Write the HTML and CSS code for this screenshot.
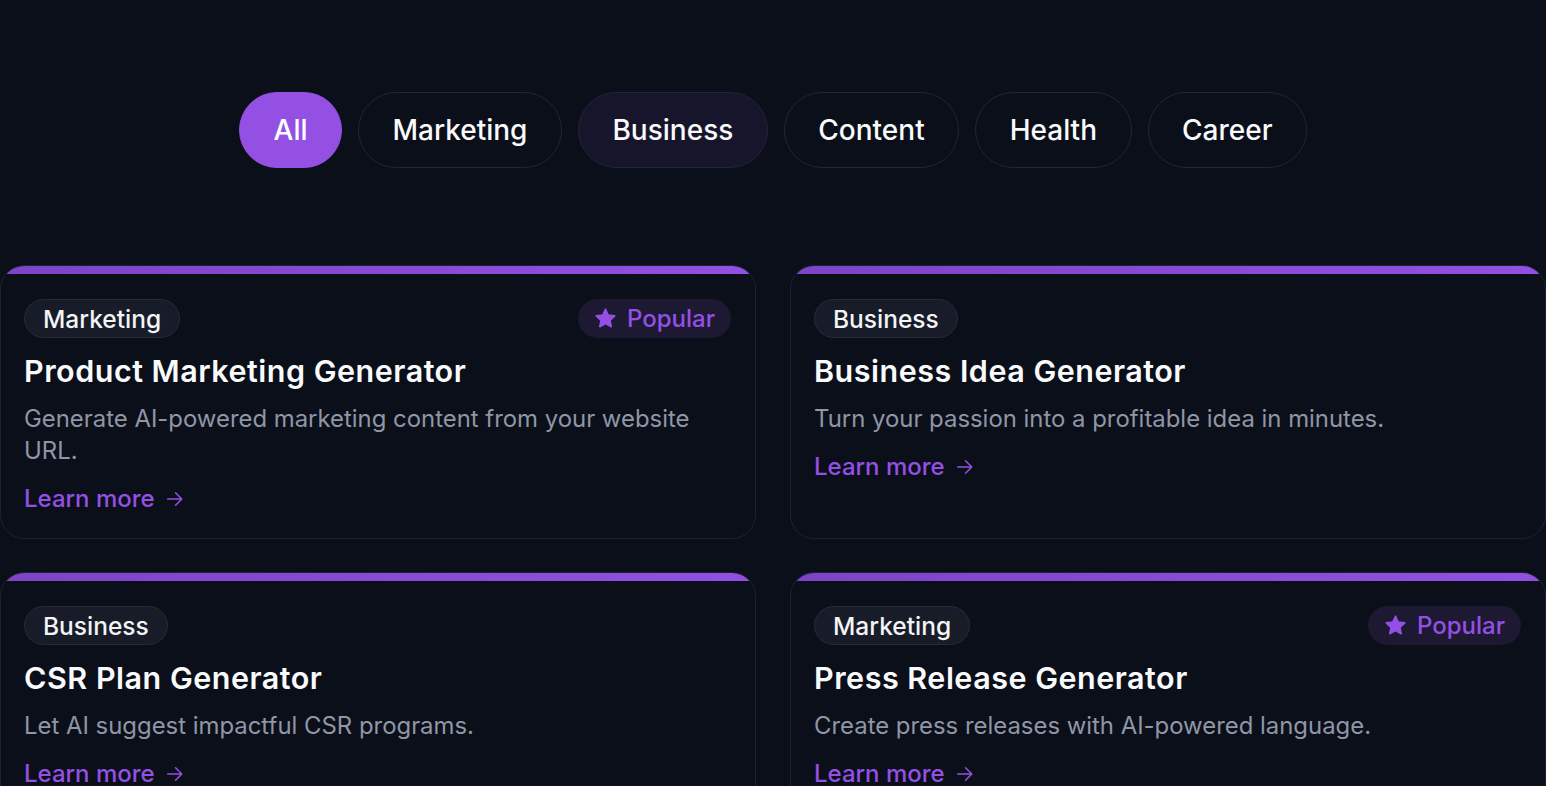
FILE: index.html
```html
<!DOCTYPE html>
<html lang="en">
<head>
<meta charset="utf-8">
<title>Generators</title>
<link rel="stylesheet" href="styles.css">
</head>
<body>
<div class="page">
  <nav class="filters">
    <button class="pill active">All</button>
    <button class="pill">Marketing</button>
    <button class="pill hover">Business</button>
    <button class="pill">Content</button>
    <button class="pill">Health</button>
    <button class="pill">Career</button>
  </nav>

  <section class="grid">
    <article class="card">
      <div class="card-head">
        <span class="tag">Marketing</span>
        <span class="popular"><svg class="star" viewBox="0 0 24 24"><path d="M12 2.2l2.9 6.2 6.8.8-5 4.7 1.3 6.7L12 17.3l-6 3.3 1.3-6.7-5-4.7 6.8-.8z" fill="currentColor" stroke="currentColor" stroke-width="1.6" stroke-linejoin="round"/></svg>Popular</span>
      </div>
      <h3 class="title">Product Marketing Generator</h3>
      <p class="desc">Generate AI-powered marketing content from your website URL.</p>
      <a class="more" href="#">Learn more <svg class="arrow" viewBox="0 0 16 16"><path d="M1.5 8h12.5M8.5 2.5L14 8l-5.5 5.5" fill="none" stroke="currentColor" stroke-width="1.4" stroke-linecap="round" stroke-linejoin="round"/></svg></a>
    </article>

    <article class="card">
      <div class="card-head">
        <span class="tag">Business</span>
      </div>
      <h3 class="title">Business Idea Generator</h3>
      <p class="desc">Turn your passion into a profitable idea in minutes.</p>
      <a class="more" href="#">Learn more <svg class="arrow" viewBox="0 0 16 16"><path d="M1.5 8h12.5M8.5 2.5L14 8l-5.5 5.5" fill="none" stroke="currentColor" stroke-width="1.4" stroke-linecap="round" stroke-linejoin="round"/></svg></a>
    </article>

    <article class="card">
      <div class="card-head">
        <span class="tag">Business</span>
      </div>
      <h3 class="title">CSR Plan Generator</h3>
      <p class="desc">Let AI suggest impactful CSR programs.</p>
      <a class="more" href="#">Learn more <svg class="arrow" viewBox="0 0 16 16"><path d="M1.5 8h12.5M8.5 2.5L14 8l-5.5 5.5" fill="none" stroke="currentColor" stroke-width="1.4" stroke-linecap="round" stroke-linejoin="round"/></svg></a>
    </article>

    <article class="card">
      <div class="card-head">
        <span class="tag">Marketing</span>
        <span class="popular"><svg class="star" viewBox="0 0 24 24"><path d="M12 2.2l2.9 6.2 6.8.8-5 4.7 1.3 6.7L12 17.3l-6 3.3 1.3-6.7-5-4.7 6.8-.8z" fill="currentColor" stroke="currentColor" stroke-width="1.6" stroke-linejoin="round"/></svg>Popular</span>
      </div>
      <h3 class="title">Press Release Generator</h3>
      <p class="desc">Create press releases with AI-powered language.</p>
      <a class="more" href="#">Learn more <svg class="arrow" viewBox="0 0 16 16"><path d="M1.5 8h12.5M8.5 2.5L14 8l-5.5 5.5" fill="none" stroke="currentColor" stroke-width="1.4" stroke-linecap="round" stroke-linejoin="round"/></svg></a>
    </article>
  </section>
</div>
</body>
</html>
```

FILE: styles.css
```css
* { box-sizing: border-box; }

html, body {
  margin: 0;
  padding: 0;
  background: #0b0f19;
  color: #f3f4f6;
  font-family: Inter, "Noto Sans", "Liberation Sans", sans-serif;
  overflow: hidden;
}

.page {
  padding-top: 92px;
}

.filters {
  display: flex;
  justify-content: center;
  gap: 16px;
}

.pill {
  font-family: inherit;
  font-size: 28px;
  font-weight: 500;
  color: #f9fafb;
  background: transparent;
  border: 1.5px solid #1f2634;
  border-radius: 999px;
  height: 76px;
  padding: 0 33.5px;
  line-height: 1;
}

.pill.active {
  background: #9350e2;
  border-color: #9350e2;
  color: #ffffff;
}

.pill.hover {
  background: #17152b;
}

.grid {
  margin-top: 97px;
  display: grid;
  grid-template-columns: 1fr 1fr;
  gap: 33px 34px;
}

.card {
  position: relative;
  overflow: hidden;
  border: 1px solid #1c2230;
  border-radius: 24px;
  padding: 33px 24px 23px 23px;
  background: #0b0f19;
}

.card::before {
  content: "";
  position: absolute;
  left: 0;
  right: 0;
  top: 0;
  height: 8px;
  background: linear-gradient(90deg, #7d44c6, #9250e2);
}

.card-head {
  display: flex;
  justify-content: space-between;
  align-items: center;
}

.tag {
  display: inline-flex;
  align-items: center;
  height: 39px;
  padding: 0 18px;
  font-size: 24.5px;
  font-weight: 500;
  color: #f3f4f6;
  background: #171c28;
  border: 1px solid #252b39;
  border-radius: 999px;
}

.popular {
  display: inline-flex;
  align-items: center;
  gap: 10px;
  height: 39px;
  padding: 0 16px;
  font-size: 24px;
  font-weight: 500;
  color: #9450e4;
  background: #1d1932;
  border-radius: 999px;
}

.star {
  width: 23px;
  height: 23px;
}

.title {
  margin: 15px 0 0;
  font-size: 30.5px;
  line-height: 36px;
  font-weight: 600;
  letter-spacing: 0.5px;
  color: #f9fafb;
}

.desc {
  margin: 14px 0 0;
  font-size: 23.9px;
  line-height: 32px;
  color: #8f96a6;
}

.more {
  display: inline-flex;
  align-items: center;
  gap: 11px;
  margin-top: 16px;
  font-size: 24px;
  line-height: 32px;
  font-weight: 500;
  color: #9450e4;
  text-decoration: none;
}

.arrow {
  width: 18px;
  height: 18px;
}
```
